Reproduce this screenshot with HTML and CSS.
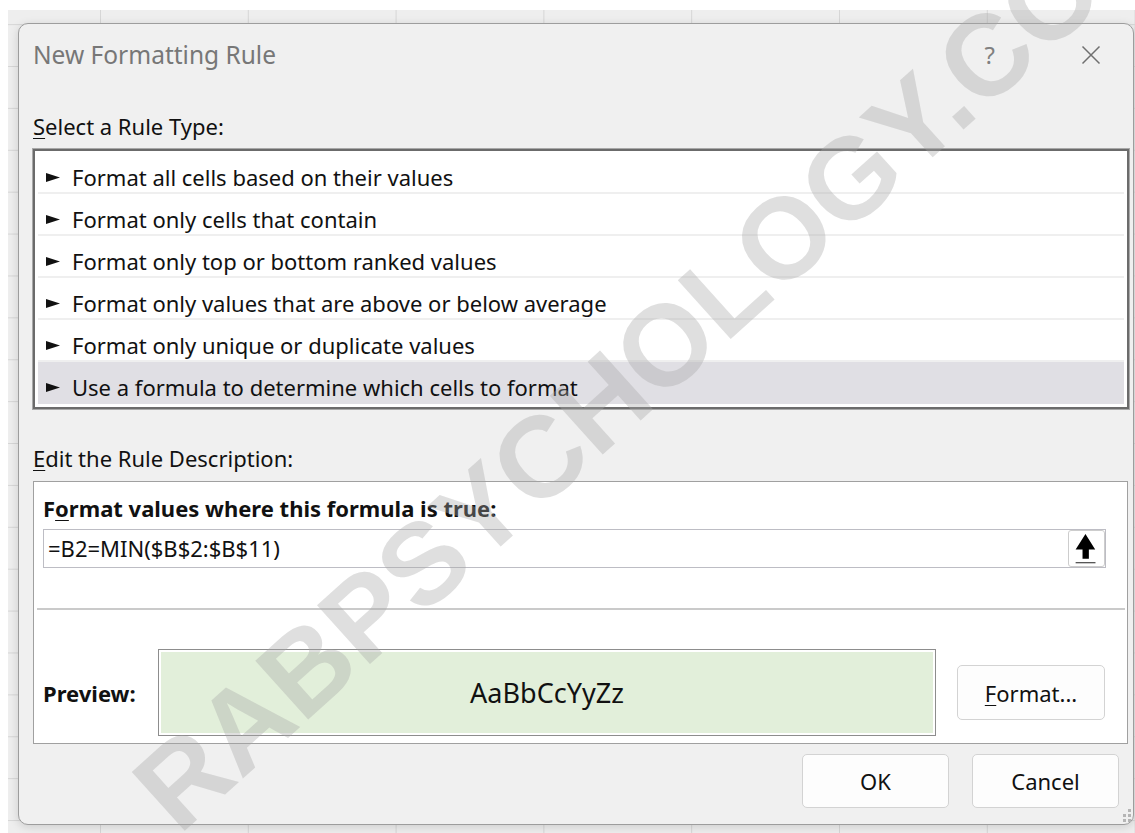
FILE: index.html
```html
<!DOCTYPE html>
<html lang="en">
<head>
<meta charset="utf-8">
<title>New Formatting Rule</title>
<link rel="stylesheet" href="styles.css">
</head>
<body>
  <div class="sheet">
    <div class="dialog">
      <div class="titlebar">
        <span class="title">New Formatting Rule</span>
        <span class="help">?</span>
        <svg class="close" viewBox="0 0 20 20" aria-hidden="true">
          <path d="M1.5 1.5 L18.5 18.5 M18.5 1.5 L1.5 18.5"/>
        </svg>
      </div>

      <div class="label label-type"><u>S</u>elect a Rule Type:</div>
      <ul class="rule-list">
        <li class="rule"><svg class="pointer" viewBox="0 0 14 9"><polygon points="0,0 14,4.5 0,9"/></svg><span>Format all cells based on their values</span></li>
        <li class="rule"><svg class="pointer" viewBox="0 0 14 9"><polygon points="0,0 14,4.5 0,9"/></svg><span>Format only cells that contain</span></li>
        <li class="rule"><svg class="pointer" viewBox="0 0 14 9"><polygon points="0,0 14,4.5 0,9"/></svg><span>Format only top or bottom ranked values</span></li>
        <li class="rule"><svg class="pointer" viewBox="0 0 14 9"><polygon points="0,0 14,4.5 0,9"/></svg><span>Format only values that are above or below average</span></li>
        <li class="rule"><svg class="pointer" viewBox="0 0 14 9"><polygon points="0,0 14,4.5 0,9"/></svg><span>Format only unique or duplicate values</span></li>
        <li class="rule selected"><svg class="pointer" viewBox="0 0 14 9"><polygon points="0,0 14,4.5 0,9"/></svg><span>Use a formula to determine which cells to format</span></li>
      </ul>

      <div class="label label-desc"><u>E</u>dit the Rule Description:</div>
      <div class="desc">
        <div class="desc-title">F<u>o</u>rmat values where this formula is true:</div>
        <div class="formula">
          <span class="formula-text">=B2=MIN($B$2:$B$11)</span>
          <button class="ref" type="button" aria-label="Collapse dialog">
            <svg viewBox="0 0 37 37" aria-hidden="true">
              <polygon class="ref-arrow" points="17.4,3.3 27.7,19.5 21,19.5 21,29.3 14.3,29.3 14.3,19.5 7,19.5"/>
              <line class="ref-line" x1="7" y1="33.5" x2="28" y2="33.5"/>
            </svg>
          </button>
        </div>
        <div class="sep"></div>
        <div class="preview-row">
          <span class="preview-label">Preview:</span>
          <div class="preview-box"><div class="swatch">AaBbCcYyZz</div></div>
          <button class="btn btn-format" type="button"><u>F</u>ormat...</button>
        </div>
      </div>

      <div class="actions">
        <button class="btn btn-action" type="button">OK</button>
        <button class="btn btn-action" type="button">Cancel</button>
      </div>

      <svg class="grip" viewBox="0 0 12 14" aria-hidden="true">
        <rect x="8" y="0" width="3" height="3"/>
        <rect x="8" y="5" width="3" height="3"/>
        <rect x="3" y="5" width="3" height="3"/>
        <rect x="8" y="10" width="3" height="3"/>
        <rect x="3" y="10" width="3" height="3"/>
      </svg>
    </div>
  </div>

  <svg class="watermark" viewBox="0 0 1135 833" aria-hidden="true">
    <text class="wm-text" x="179" y="836" transform="rotate(-42 179 836)">RABPSYCHOLOGY.COM</text>
  </svg>
</body>
</html>
```

FILE: styles.css
```css
* {
  box-sizing: border-box;
}

html,
body {
  margin: 0;
}

body {
  position: relative;
  width: 1135px;
  height: 833px;
  overflow: hidden;
  padding: 10px 0 0 8px;
  background: #ffffff;
  font-family: "Noto Sans", "Open Sans", sans-serif;
  color: #111111;
}

/* spreadsheet behind the dialog */
.sheet {
  height: 823px;
  padding: 13px 0 0 10px;
  background-color: #eeeeee;
  background-image:
    linear-gradient(to right, #d6d6d6 1px, transparent 1px),
    linear-gradient(to bottom, #d6d6d6 1px, transparent 1px);
  background-size: 147.8px 100%, 100% 41.9px;
  background-position: 92px 0, 0 56px;
}

.dialog {
  position: relative;
  width: 1116px;
  height: 802px;
  padding: 15px 0 0 14px;
  background: #f0f0f0;
  border: 1px solid #9d9d9d;
  border-radius: 10px;
  box-shadow: 0 2px 10px rgba(0, 0, 0, 0.14);
}

/* title bar */
.titlebar {
  display: flex;
  align-items: center;
  height: 32px;
  line-height: 32px;
  padding-right: 32px;
}

.title {
  flex: 1;
  font-size: 24.5px;
  color: #777777;
}

.help {
  font-size: 24px;
  color: #808080;
  margin-right: 86px;
}

.close {
  width: 20px;
  height: 20px;
  fill: none;
  stroke: #6f6f6f;
  stroke-width: 1.5;
}

/* section labels */
.label {
  font-size: 22px;
  line-height: 28px;
}

.label-type {
  margin-top: 41px;
}

.label-desc {
  margin-top: 35px;
}

u {
  text-decoration-thickness: 1px;
  text-underline-offset: 3px;
}

/* rule type list */
.rule-list {
  list-style: none;
  width: 1096px;
  margin: 9px 0 0;
  padding: 1px 3px 3px;
  background: #ffffff;
  border: 2px solid #6b6b6b;
  box-shadow: 0 0 0 1px #a8a8a8;
}

.rule {
  display: flex;
  align-items: center;
  height: 42px;
  padding: 12px 0 2px 8px;
  border-bottom: 2px solid #efefef;
  font-size: 22px;
  line-height: 28px;
}

.rule.selected {
  background: #e0dfe4;
  border-bottom-color: #e0dfe4;
}

.pointer {
  width: 14px;
  height: 9px;
  margin-right: 12px;
  fill: #111111;
  flex: none;
}

/* rule description panel */
.desc {
  width: 1095px;
  height: 263px;
  margin-top: 9px;
  padding: 12px 21px 0 9px;
  background: #ffffff;
  border: 1px solid #a0a0a0;
}

.desc-title {
  font-size: 22px;
  font-weight: 700;
  line-height: 28px;
}

.formula {
  display: flex;
  align-items: center;
  height: 39px;
  margin-top: 7px;
  border: 1px solid #bdbdc4;
}

.formula-text {
  flex: 1;
  padding-left: 4px;
  font-size: 22px;
  line-height: 37px;
}

.ref {
  width: 37px;
  height: 37px;
  padding: 0;
  background: #ffffff;
  border: 1px solid #cdcdcd;
  border-radius: 3px;
}

.ref svg {
  display: block;
  width: 35px;
  height: 35px;
}

.ref-arrow {
  fill: #000000;
}

.ref-line {
  stroke: #4a4a4a;
  stroke-width: 1.3;
}

.sep {
  height: 2px;
  margin: 40px -19px 0 -6px;
  background: #cacaca;
}

.preview-row {
  display: flex;
  align-items: center;
  margin-top: 39px;
}

.preview-label {
  width: 115px;
  font-size: 22px;
  font-weight: 700;
  line-height: 28px;
}

.preview-box {
  width: 778px;
  height: 87px;
  padding: 2px;
  background: #ffffff;
  border: 1px solid #8d8d8d;
}

.swatch {
  display: flex;
  align-items: center;
  justify-content: center;
  height: 100%;
  background: #e2efda;
  font-size: 27px;
  line-height: 36px;
  color: #111111;
}

/* buttons */
.btn {
  padding: 0;
  background: #fdfdfd;
  border: 1px solid #d3d3d3;
  border-radius: 5px;
  font-family: "Noto Sans", "Open Sans", sans-serif;
  font-size: 22px;
  line-height: 28px;
  color: #111111;
}

.btn-format {
  width: 148px;
  height: 55px;
  margin-left: 21px;
}

.actions {
  display: flex;
  justify-content: flex-end;
  gap: 23px;
  margin-top: 10px;
  padding-right: 14px;
}

.btn-action {
  width: 147px;
  height: 54px;
}

.grip {
  position: absolute;
  right: 1px;
  bottom: 1px;
  width: 12px;
  height: 14px;
  fill: #b5b5b5;
}

/* diagonal site stamp across the page */
.watermark {
  position: absolute;
  top: 0;
  left: 0;
  width: 1135px;
  height: 833px;
  pointer-events: none;
}

.wm-text {
  font-family: "Liberation Sans", Arial, sans-serif;
  font-weight: 700;
  font-size: 115px;
  fill: rgba(165, 165, 165, 0.36);
}
```
